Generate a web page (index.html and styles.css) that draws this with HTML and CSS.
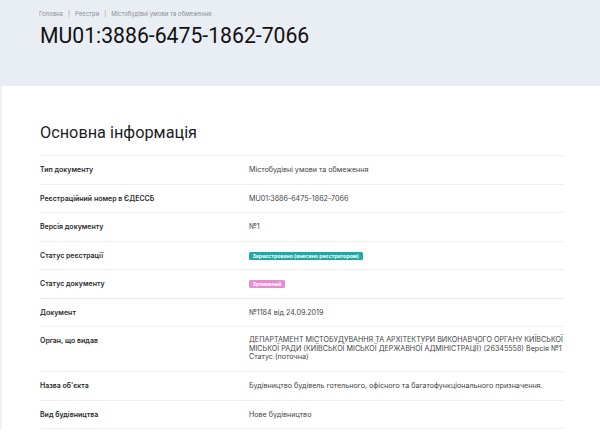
FILE: index.html
```html
<!DOCTYPE html>
<html lang="uk">
<head>
<meta charset="utf-8">
<link rel="stylesheet" href="styles.css">
</head>
<body>
<header class="hero">
  <div class="wrap">
    <nav class="crumbs">
      <span>Головна</span><span class="sep">|</span><span>Реєстри</span><span class="sep">|</span><span>Містобудівні умови та обмеження</span>
    </nav>
    <h1 class="title">MU01:3886-6475-1862-7066</h1>
  </div>
</header>
<main class="page">
  <div class="wrap">
    <h2 class="section-title">Основна інформація</h2>
    <div class="table">
      <div class="row"><div class="label">Тип документу</div><div class="value">Містобудівні умови та обмеження</div></div>
      <div class="row"><div class="label">Реєстраційний номер в ЄДЕССБ</div><div class="value">MU01:3886-6475-1862-7066</div></div>
      <div class="row"><div class="label">Версія документу</div><div class="value">№1</div></div>
      <div class="row"><div class="label">Статус реєстрації</div><div class="value"><span class="badge badge-teal">Зареєстровано (внесено реєстратором)</span></div></div>
      <div class="row"><div class="label">Статус документу</div><div class="value"><span class="badge badge-pink">Зупинений</span></div></div>
      <div class="row row-accent"><div class="label">Документ</div><div class="value">№1184 від 24.09.2019</div></div>
      <div class="row"><div class="label">Орган, що видав</div><div class="value value-multi">ДЕПАРТАМЕНТ МІСТОБУДУВАННЯ ТА АРХІТЕКТУРИ ВИКОНАВЧОГО ОРГАНУ КИЇВСЬКОЇ МІСЬКОЇ РАДИ (КИЇВСЬКОЇ МІСЬКОЇ ДЕРЖАВНОЇ АДМІНІСТРАЦІЇ) (26345558) Версія №1 Статус (поточна)</div></div>
      <div class="row"><div class="label">Назва об'єкта</div><div class="value">Будівництво будівель готельного, офісного та багатофункціонального призначення.</div></div>
      <div class="row"><div class="label">Вид будівництва</div><div class="value">Нове будівництво</div></div>
    </div>
  </div>
</main>
</body>
</html>
```
FILE: styles.css
```css
* { box-sizing: border-box; }
html, body { margin: 0; padding: 0; }
body {
  font-family: Inter, "Noto Sans", sans-serif;
  color: #1d1d1f;
  background: #ffffff;
}
.wrap {
  width: 524px;
  margin-left: 40px;
}
.hero {
  background: #e9eef4;
  height: 86px;
  padding-top: 10px;
}
.crumbs {
  font-size: 6px;
  color: #8a8f96;
  line-height: 8px;
  display: flex;
  gap: 5px;
  margin-left: -1px;
}
.title {
  margin: 6px 0 0;
  font-family: Roboto, "Noto Sans", sans-serif;
  font-size: 21.2px;
  font-weight: 400;
  line-height: 24px;
  color: #111;
}
.page {
  padding-top: 37px;
  border-left: 2px solid #f1f2f4;
}
.page .wrap { margin-left: 38px; }
.section-title {
  margin: 0;
  font-family: Roboto, "Noto Sans", sans-serif;
  font-size: 16.3px;
  font-weight: 400;
  line-height: 20px;
  color: #1d1d1f;
}
.table {
  margin-top: 12px;
  border-bottom: 1px solid #eef1f4;
}
.row {
  display: grid;
  grid-template-columns: 209px 1fr;
  border-top: 1px solid #eef1f4;
  padding: 9px 0 9.5px;
  line-height: 9px;
}
.row-accent { border-top-color: #e0e9f5; }
.label {
  font-size: 7px;
  font-weight: 600;
  color: #2a2a2a;
}
.value {
  font-size: 7.15px;
  color: #444;
  margin-right: -4px;
}
.value-multi { line-height: 8.6px; }
.badge {
  display: inline-block;
  font-size: 5.2px;
  font-weight: 700;
  line-height: 8px;
  padding: 0 3.5px;
  border-radius: 1.5px;
  color: #fff;
  vertical-align: middle;
}
.badge-teal { background: #1fa9a4; }
.badge-pink { background: #e98bd0; }
```
